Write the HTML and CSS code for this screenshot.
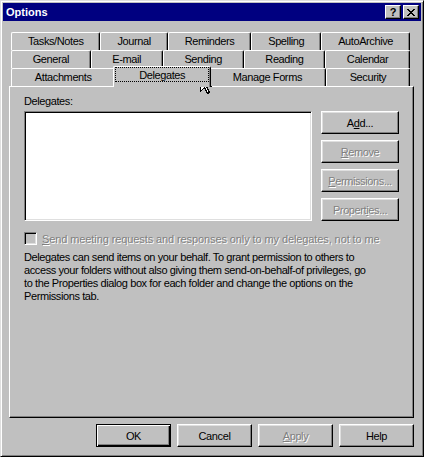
FILE: index.html
```html
<!DOCTYPE html>
<html lang="en">
<head>
    <meta charset="UTF-8">
    <title>Options</title>
    <link rel="stylesheet" href="styles.css">
</head>
<body>
    <div class="window">
        <div class="titlebar">
            <span class="title">Options</span>
            <div class="caption-buttons">
                <span class="cap-btn">?</span>
                <span class="cap-btn">
                    <svg width="8" height="7" viewBox="0 0 8 7" shape-rendering="crispEdges">
                        <path d="M0 0h2v1h-2zM6 0h2v1h-2zM1 1h2v1h-2zM5 1h2v1h-2zM2 2h4v1h-4zM3 3h2v1h-2zM2 4h4v1h-4zM1 5h2v1h-2zM5 5h2v1h-2zM0 6h2v1h-2zM6 6h2v1h-2z" fill="#000"/>
                    </svg>
                </span>
            </div>
        </div>

        <div class="client">
            <div class="tabs">
                <div class="tab-row">
                    <div class="tab">Tasks/Notes</div>
                    <div class="tab">Journal</div>
                    <div class="tab">Reminders</div>
                    <div class="tab">Spelling</div>
                    <div class="tab">AutoArchive</div>
                </div>
                <div class="tab-row">
                    <div class="tab">General</div>
                    <div class="tab">E-mail</div>
                    <div class="tab">Sending</div>
                    <div class="tab">Reading</div>
                    <div class="tab">Calendar</div>
                </div>
                <div class="tab-row">
                    <div class="tab">Attachments</div>
                    <div class="tab active"><span class="focus">Delegates</span></div>
                    <div class="tab">Manage Forms</div>
                    <div class="tab">Security</div>
                </div>
            </div>

            <div class="panel">
                <div class="label">Dele<u>g</u>ates:</div>
                <div class="delegates-row">
                    <div class="listbox"></div>
                    <div class="side-buttons">
                        <button class="btn">A<u>d</u>d...</button>
                        <button class="btn disabled"><u>R</u>emove</button>
                        <button class="btn disabled"><u>P</u>ermissions...</button>
                        <button class="btn disabled">Propert<u>i</u>es...</button>
                    </div>
                </div>
                <div class="check-row">
                    <span class="checkbox"></span>
                    <span class="disabled-text check-label"><u>S</u>end meeting requests and responses only to my delegates, not to me</span>
                </div>
                <p class="note">Delegates can send items on your behalf. To grant permission to others to<br>access your folders without also giving them send-on-behalf-of privileges, go<br>to the Properties dialog box for each folder and change the options on the<br>Permissions tab.</p>
            </div>

            <div class="dialog-buttons">
                <button class="btn wide default">OK</button>
                <button class="btn wide">Cancel</button>
                <button class="btn wide disabled"><u>A</u>pply</button>
                <button class="btn wide">Help</button>
            </div>
        </div>

        <!-- mouse pointer over the Delegates tab -->
        <svg class="pointer" width="13" height="20" viewBox="0 0 13 20" shape-rendering="crispEdges">
            <path d="M0.5 0.5V16.5L4.5 12.5L7.5 18.5L9.5 17.5L6.5 11.5H11.5Z" fill="#fff" stroke="#000" stroke-width="1"/>
        </svg>
    </div>
</body>
</html>
```

FILE: styles.css
```css
body { margin: 0; font-family: "Liberation Sans", Arial, sans-serif; font-size: 11px; letter-spacing: -0.4px; color: #000; background: #c0c0c0; }
u { text-decoration: underline; text-underline-offset: 1px; }

.window { position: relative; width: 424px; height: 457px; box-sizing: border-box; padding: 2px; background: #c0c0c0;
    border: 1px solid; border-color: #dfdfdf #000 #000 #dfdfdf; box-shadow: inset 1px 1px #fff, inset -1px -1px #808080; }

.titlebar { height: 18px; background: #000080; display: flex; align-items: center; justify-content: space-between; padding: 0 2px 0 3px; }
.title { color: #fff; font-weight: bold; font-size: 11px; letter-spacing: 0; }
.caption-buttons { display: flex; gap: 2px; }
.cap-btn { width: 16px; height: 14px; box-sizing: border-box; background: #c0c0c0; display: flex; align-items: center; justify-content: center;
    border: 1px solid; border-color: #fff #000 #000 #fff; box-shadow: inset -1px -1px #808080; font-weight: bold; font-size: 11px; line-height: 12px; letter-spacing: 0; }

.client { display: flex; flex-direction: column; padding: 11px 7px 7px 6px; }

.tabs { display: flex; flex-direction: column; margin-left: 2px; width: 399px; }
.tab-row { display: flex; height: 18px; }
.tab { flex: 1 1 auto; height: 18px; box-sizing: border-box; text-align: center; white-space: nowrap; line-height: 16px;
    border-top: 1px solid #fff; border-left: 1px solid #fff; border-right: 1px solid #000; border-radius: 2px 2px 0 0;
    box-shadow: inset -1px 0 #808080; background: #c0c0c0; }
.tab.active { position: relative; z-index: 1; height: 21px; margin: -2px -2px -1px; padding: 0 1px 0 1px; }
.focus { display: block; margin: 0 0 3px 0; height: 15px; line-height: 14px; border: 1px dotted #000; box-sizing: border-box; }

.panel { width: 405px; height: 332px; box-sizing: border-box; padding: 8px 14px; display: flex; flex-direction: column;
    border: 1px solid; border-color: #fff #000 #000 #fff; box-shadow: inset -1px -1px #808080; }
.label { line-height: 13px; }
.delegates-row { display: flex; gap: 9px; margin-top: 3px; }
.listbox { width: 290px; height: 110px; box-sizing: border-box; background: #fff;
    border: 1px solid; border-color: #808080 #fff #fff #808080; box-shadow: inset 1px 1px #000, inset -1px -1px #dfdfdf; }
.side-buttons { display: flex; flex-direction: column; gap: 6px; }

.btn { width: 78px; height: 23px; box-sizing: border-box; padding: 0; background: #c0c0c0; font: inherit; letter-spacing: inherit; color: #000;
    border: 1px solid; border-color: #fff #000 #000 #fff; box-shadow: inset -1px -1px #808080, inset 1px 1px #dfdfdf; }
.btn.wide { width: 75px; }
.btn.default { border-color: #000; box-shadow: inset 1px 1px #fff, inset -1px -1px #000, inset -2px -2px #808080; }
.btn.disabled, .disabled-text { color: #808080; text-shadow: 1px 1px 0 #fff; }

.check-row { display: flex; align-items: center; gap: 5px; margin-top: 11px; height: 13px; white-space: nowrap; }
.check-label { letter-spacing: -0.1px; }
.checkbox { width: 13px; height: 13px; box-sizing: border-box; background: #c0c0c0;
    border: 1px solid; border-color: #808080 #fff #fff #808080; box-shadow: inset 1px 1px #000, inset -1px -1px #dfdfdf; }

.note { margin: 6px 0 0; line-height: 13px; white-space: nowrap; }

.dialog-buttons { display: flex; justify-content: flex-end; gap: 6px; margin-top: 6px; }

.pointer { position: absolute; left: 199px; top: 74px; }
```
